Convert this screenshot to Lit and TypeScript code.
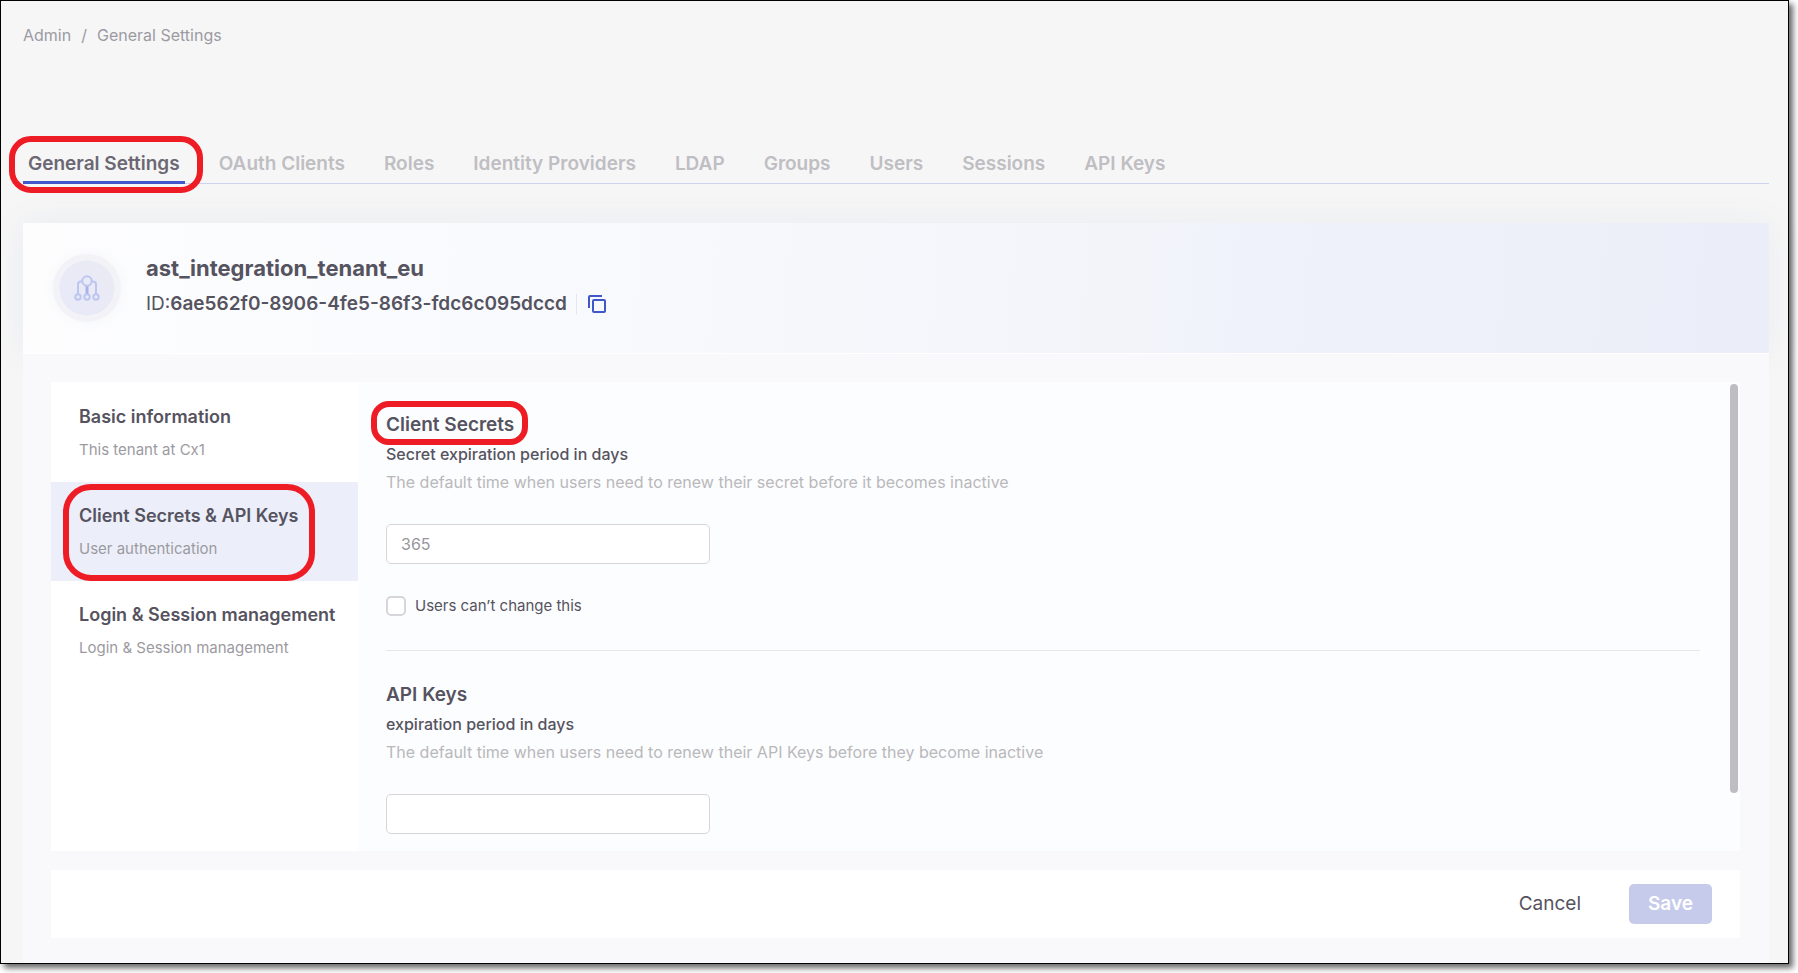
import { LitElement, html, css, svg } from "lit";
import { customElement, state } from "lit/decorators.js";
import { classMap } from "lit/directives/class-map.js";

const TABS = [
  "General Settings",
  "OAuth Clients",
  "Roles",
  "Identity Providers",
  "LDAP",
  "Groups",
  "Users",
  "Sessions",
  "API Keys",
];

const SECTIONS = [
  { title: "Basic information", sub: "This tenant at Cx1" },
  { title: "Client Secrets & API Keys", sub: "User authentication" },
  { title: "Login & Session management", sub: "Login & Session management" },
];

const tenantIcon = svg`
  <svg viewBox="0 0 26 26" width="26" height="26" fill="none" aria-hidden="true">
    <g stroke="#bcc6ef" stroke-width="2">
      <path d="M9 6.500H7Q4 6.500 4 9.500V19"/>
      <path d="M17 6.500H19Q22 6.500 22 9.500V19"/>
      <path d="M13 11V19" stroke="#a9b0ec" stroke-width="3"/>
      <circle cx="13" cy="6" r="4.700" fill="#e9eaf6"/>
      <circle cx="4" cy="22" r="2.700" fill="#e9eaf6"/>
      <circle cx="13" cy="22" r="2.700" fill="#e9eaf6"/>
      <circle cx="22" cy="22" r="2.700" fill="#e9eaf6"/>
    </g>
  </svg>`;

const copyIcon = svg`
  <svg viewBox="0 0 18 18" width="18" height="18" fill="none" stroke="#4257c9" stroke-width="2" aria-hidden="true">
    <path d="M1 13V2Q1 1 2 1H14"/>
    <rect x="5" y="5" width="12" height="12" rx="1"/>
  </svg>`;

@customElement("app-root")
export class AppRoot extends LitElement {
  @state() private section = 1;

  static styles = css`
    :host {
      display: block;
      box-sizing: border-box;
      height: 100vh;
      padding: 0 9px 9px 0;
      background: #fff;
      font-family: Inter, "Liberation Sans", sans-serif;
      color: #565360;
    }
    * {
      box-sizing: border-box;
    }
    h1, h2, p {
      margin: 0;
    }
    button, input {
      font-family: inherit;
      color: inherit;
    }
    button {
      border: 0;
      background: none;
      padding: 0;
    }
    .frame {
      height: 100%;
      display: flex;
      flex-direction: column;
      padding: 22px 19px 0 22px;
      border: 1px solid #000;
      background: #f6f6f6;
      box-shadow: 4px 4px 6px rgba(0, 0, 0, 0.6);
    }
    .crumbs {
      display: flex;
      gap: 10px;
      font-size: 16px;
      line-height: 24px;
      color: #9c9aa3;
    }
    .crumbs a {
      color: inherit;
      text-decoration: none;
    }
    .tabs {
      display: flex;
      gap: 29px;
      margin-top: 105px;
      border-bottom: 1px solid #ccd4f0;
    }
    .tab {
      position: relative;
      margin-bottom: -1px;
      padding: 0 5px 5px;
      border-bottom: 3px solid transparent;
      font-size: 19px;
      font-weight: 600;
      line-height: 24px;
      color: #bfbec3;
      text-decoration: none;
      white-space: nowrap;
    }
    .tab.active {
      color: #6b6874;
      border-color: #4257c9;
    }
    .mark::after {
      content: "";
      position: absolute;
      border: 6px solid #ee1c25;
      pointer-events: none;
    }
    .tab.mark::after {
      inset: -16px -18px -12px -14px;
      border-radius: 22px;
    }
    .item.mark::after {
      inset: 2px 43px 0 12px;
      border-radius: 28px;
    }
    .heading.mark::after {
      inset: -12px -14px -8px -15px;
      border-radius: 18px;
    }
    .card {
      flex: 1;
      min-height: 0;
      display: flex;
      flex-direction: column;
      margin-top: 39px;
    }
    .tenant {
      display: flex;
      gap: 25px;
      padding: 31px 30px;
      border-bottom: 1px solid #fff;
      background: linear-gradient(95deg, #fdfdfe 0%, #f8fafd 30%, #f2f4fa 64%, #eff2fa 70%, #ebeef8 100%);
      box-shadow: 0 0 32px rgba(90, 110, 180, 0.08);
    }
    .avatar {
      display: grid;
      place-items: center;
      width: 68px;
      height: 68px;
      border: 6px solid #f3f3f7;
      border-radius: 50%;
      background: linear-gradient(225deg, #ebebf4, #e8e9f8) padding-box;
      box-shadow: 0 0 12px rgba(90, 110, 180, 0.05);
    }
    .tenant-info {
      display: flex;
      flex-direction: column;
      gap: 8px;
    }
    .tenant-name {
      font-size: 22px;
      font-weight: 700;
      line-height: 28px;
    }
    .tenant-id {
      display: flex;
      align-items: center;
      font-size: 19px;
      line-height: 28px;
    }
    .tenant-id strong {
      font-weight: 600;
    }
    .copy {
      display: flex;
      margin-left: 9px;
      padding: 1px 0 1px 11px;
      border-left: 1px solid #e6e7ee;
    }
    .body {
      position: relative;
      flex: 1;
      min-height: 0;
      display: flex;
      flex-direction: column;
      gap: 19px;
      padding: 28px 29px 25px 28px;
      background: #f9f9fb;
    }
    .settings {
      flex: 1;
      min-height: 0;
      display: flex;
      background: #fcfdfe;
    }
    .sections {
      width: 307px;
      padding-top: 1px;
      background: #fff;
    }
    .item {
      position: relative;
      display: flex;
      flex-direction: column;
      gap: 11px;
      width: 100%;
      padding: 22px 0 22px 28px;
      text-align: left;
    }
    .item.active {
      background: #eceff9;
    }
    .item-title {
      font-size: 18px;
      font-weight: 600;
      line-height: 24px;
    }
    .item-sub {
      font-size: 15px;
      line-height: 20px;
      color: #9c9aa1;
    }
    .pane {
      flex: 1;
      overflow-y: auto;
      scrollbar-width: none;
      padding: 31px 30px 0 28px;
    }
    .scroll {
      width: 10px;
      padding: 2px 2px 2px 0;
    }
    .thumb {
      height: 88%;
      border-radius: 4px;
      background: #c0bdc2;
    }
    .group + .group {
      margin-top: 34px;
      padding-top: 32px;
      border-top: 1px solid #e7e7ea;
    }
    .heading {
      position: relative;
      width: fit-content;
      font-size: 19px;
      font-weight: 600;
      line-height: 24px;
    }
    .label {
      display: block;
      width: fit-content;
      margin-top: 5px;
      font-size: 16px;
      font-weight: 500;
      line-height: 24px;
    }
    .hint {
      margin-top: 4px;
      font-size: 16px;
      line-height: 24px;
      color: #b9b8bb;
    }
    .field {
      display: block;
      width: 324px;
      height: 40px;
      margin-top: 30px;
      padding: 0 14px;
      border: 1px solid #d6d5da;
      border-radius: 5px;
      background: #fff;
      font-size: 16px;
      color: #98969d;
      outline: none;
    }
    .check {
      display: flex;
      align-items: center;
      gap: 9px;
      width: fit-content;
      margin-top: 32px;
      font-size: 15px;
      line-height: 20px;
    }
    .box {
      appearance: none;
      width: 20px;
      height: 20px;
      margin: 0;
      border: 2px solid #d6d5da;
      border-radius: 5px;
      background: #fff;
    }
    .box:checked {
      background: #4257c9;
    }
    .actions {
      display: flex;
      justify-content: flex-end;
      align-items: center;
      gap: 20px;
      padding: 14px 28px;
      background: #fff;
    }
    .btn {
      height: 40px;
      padding: 0 19px;
      border-radius: 5px;
      font-size: 19px;
      line-height: 24px;
    }
    .cancel {
      padding: 0 28px;
    }
    .save {
      background: #c6cbeb;
      color: #fff;
      font-weight: 600;
    }
  `;

  private group(id: string, title: string, label: string, hint: string, value: string, marked: boolean, lock: boolean) {
    return html`
      <section class="group">
        <h2 class=${classMap({ heading: true, mark: marked })}>${title}</h2>
        <label class="label" for=${id}>${label}</label>
        <p class="hint">${hint}</p>
        <input class="field" id=${id} type="text" .value=${value} />
        ${lock
          ? html`<label class="check"><input class="box" type="checkbox" />Users can’t change this</label>`
          : ""}
      </section>
    `;
  }

  render() {
    return html`
      <main class="frame">
        <nav class="crumbs" aria-label="Breadcrumb">
          <a href="#admin">Admin</a><span>/</span><a href="#general">General Settings</a>
        </nav>
        <nav class="tabs" aria-label="Settings">
          ${TABS.map(
            (tab, i) => html`<a href="#" class=${classMap({ tab: true, active: i === 0, mark: i === 0 })}>${tab}</a>`,
          )}
        </nav>
        <div class="card">
          <header class="tenant">
            <div class="avatar">${tenantIcon}</div>
            <div class="tenant-info">
              <h1 class="tenant-name">ast_integration_tenant_eu</h1>
              <div class="tenant-id">
                <span>ID:<strong>6ae562f0-8906-4fe5-86f3-fdc6c095dccd</strong></span>
                <button class="copy" aria-label="Copy ID">${copyIcon}</button>
              </div>
            </div>
          </header>
          <div class="body">
            <div class="settings">
              <nav class="sections" aria-label="Sections">
                ${SECTIONS.map(
                  (s, i) => html`
                    <button
                      class=${classMap({ item: true, active: i === this.section, mark: i === 1 })}
                      @click=${() => (this.section = i)}
                    >
                      <span class="item-title">${s.title}</span>
                      <span class="item-sub">${s.sub}</span>
                    </button>
                  `,
                )}
              </nav>
              <div class="pane">
                ${this.group(
                  "secret-days",
                  "Client Secrets",
                  "Secret expiration period in days",
                  "The default time when users need to renew their secret before it becomes inactive",
                  "365",
                  true,
                  true,
                )}
                ${this.group(
                  "key-days",
                  "API Keys",
                  "expiration period in days",
                  "The default time when users need to renew their API Keys before they become inactive",
                  "",
                  false,
                  false,
                )}
              </div>
              <div class="scroll" aria-hidden="true"><div class="thumb"></div></div>
            </div>
            <footer class="actions">
              <button class="btn cancel">Cancel</button>
              <button class="btn save">Save</button>
            </footer>
          </div>
        </div>
      </main>
    `;
  }
}
